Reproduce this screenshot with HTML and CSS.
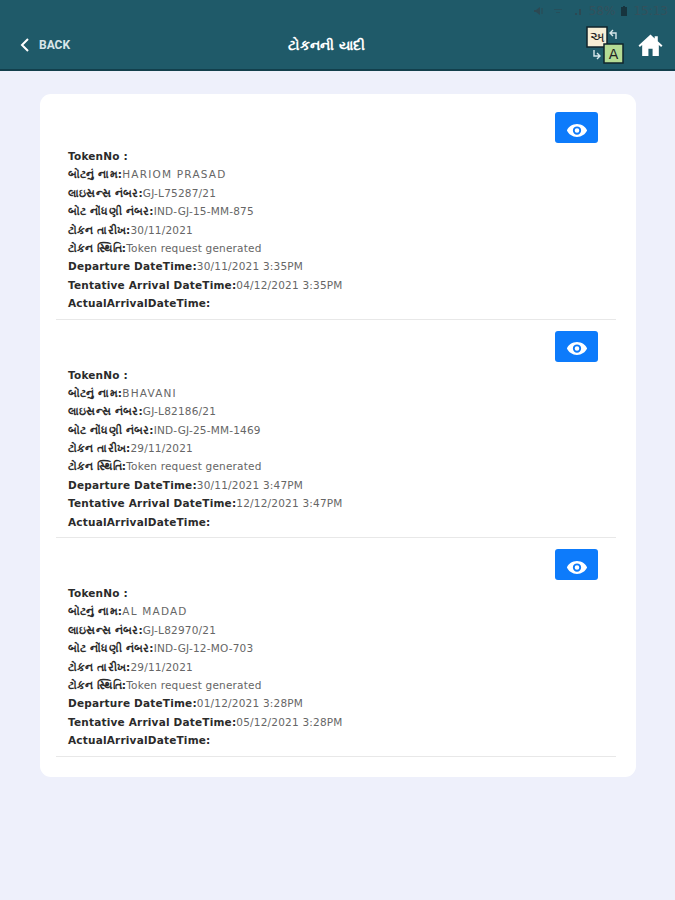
FILE: index.html
```html
<!DOCTYPE html>
<html lang="gu">
<head>
    <meta charset="UTF-8">
    <meta name="viewport" content="width=device-width, initial-scale=1.0">
    <title>ટોકનની યાદી</title>
    <link rel="stylesheet" href="styles.css">
</head>
<body>
    <header class="topbar">
        <div class="status">
            <svg class="status-icon" viewBox="0 0 10 10"><path d="M1 4h2l4-3v8L3 6H1z"/><path d="M8.500 2h1v6h-1z"/></svg>
            <svg class="status-icon status-wifi" viewBox="0 0 10 10"><path d="M1 3h8v1H1zM3 6h4v1H3z"/></svg>
            <svg class="status-icon" viewBox="0 0 10 10"><path d="M2 7h2v2H2zM6 3h2v6H6z"/></svg>
            <span>58%</span>
            <svg class="status-icon status-battery" viewBox="0 0 6 10"><path d="M2 0h2v1h2v9H0V1h2z"/></svg>
            <span>15:13</span>
        </div>
        <div class="bar">
            <a class="back" href="#">
                <svg class="back-icon" viewBox="0 0 10 16"><path d="M8 2 2 8l6 6"/></svg>
                <span>BACK</span>
            </a>
            <h1>ટોકનની યાદી</h1>
            <div class="actions">
                <svg class="lang-icon" viewBox="0 0 38 38">
                    <path class="arrow" d="M24 7h6v6M27 4l-3 3 3 3M8 24v6h6M11 27l3 3-3 3"/>
                    <rect class="lang-gu" x="1" y="1" width="20" height="20"/>
                    <text class="lang-text" x="11" y="16">અ</text>
                    <rect class="lang-en" x="18" y="18" width="19" height="19"/>
                    <text class="lang-text" x="27.5" y="33">A</text>
                </svg>
                <svg class="home-icon" viewBox="0 0 24 24"><path d="M12 1.500 0.500 12l1.300 1.400L4 11.400V22h6v-7h4v7h6V11.400l2.200 2L23.500 12 19 7.900V3h-3v2.200z"/></svg>
            </div>
        </div>
    </header>

    <main class="card">
        <section class="token">
            <div class="token-top"><button class="view"><svg class="eye" viewBox="0 0 24 16"><path fill-rule="evenodd" d="M12 1c5 0 9.200 3 11 7-1.800 4-6 7-11 7S2.800 12 1 8c1.800-4 6-7 11-7zm0 2.500a4.500 4.500 0 1 0 0 9 4.500 4.500 0 0 0 0-9zm0 2a2.500 2.500 0 1 1 0 5 2.500 2.500 0 0 1 0-5z"/></svg></button></div>
            <p><b>TokenNo :</b></p>
            <p><b>બોટનું નામ:</b><span class="name">HARIOM PRASAD</span></p>
            <p><b>લાઇસન્સ નંબર:</b>GJ-L75287/21</p>
            <p><b>બોટ નોંધણી નંબર:</b>IND-GJ-15-MM-875</p>
            <p><b>ટોકન તારીખ:</b>30/11/2021</p>
            <p><b>ટોકન સ્થિતિ:</b>Token request generated</p>
            <p><b>Departure DateTime:</b>30/11/2021 3:35PM</p>
            <p><b>Tentative Arrival DateTime:</b>04/12/2021 3:35PM</p>
            <p><b>ActualArrivalDateTime:</b></p>
        </section>
        <section class="token">
            <div class="token-top"><button class="view"><svg class="eye" viewBox="0 0 24 16"><path fill-rule="evenodd" d="M12 1c5 0 9.200 3 11 7-1.800 4-6 7-11 7S2.800 12 1 8c1.800-4 6-7 11-7zm0 2.500a4.500 4.500 0 1 0 0 9 4.500 4.500 0 0 0 0-9zm0 2a2.500 2.500 0 1 1 0 5 2.500 2.500 0 0 1 0-5z"/></svg></button></div>
            <p><b>TokenNo :</b></p>
            <p><b>બોટનું નામ:</b><span class="name">BHAVANI</span></p>
            <p><b>લાઇસન્સ નંબર:</b>GJ-L82186/21</p>
            <p><b>બોટ નોંધણી નંબર:</b>IND-GJ-25-MM-1469</p>
            <p><b>ટોકન તારીખ:</b>29/11/2021</p>
            <p><b>ટોકન સ્થિતિ:</b>Token request generated</p>
            <p><b>Departure DateTime:</b>30/11/2021 3:47PM</p>
            <p><b>Tentative Arrival DateTime:</b>12/12/2021 3:47PM</p>
            <p><b>ActualArrivalDateTime:</b></p>
        </section>
        <section class="token">
            <div class="token-top"><button class="view"><svg class="eye" viewBox="0 0 24 16"><path fill-rule="evenodd" d="M12 1c5 0 9.200 3 11 7-1.800 4-6 7-11 7S2.800 12 1 8c1.800-4 6-7 11-7zm0 2.500a4.500 4.500 0 1 0 0 9 4.500 4.500 0 0 0 0-9zm0 2a2.500 2.500 0 1 1 0 5 2.500 2.500 0 0 1 0-5z"/></svg></button></div>
            <p><b>TokenNo :</b></p>
            <p><b>બોટનું નામ:</b><span class="name">AL MADAD</span></p>
            <p><b>લાઇસન્સ નંબર:</b>GJ-L82970/21</p>
            <p><b>બોટ નોંધણી નંબર:</b>IND-GJ-12-MO-703</p>
            <p><b>ટોકન તારીખ:</b>29/11/2021</p>
            <p><b>ટોકન સ્થિતિ:</b>Token request generated</p>
            <p><b>Departure DateTime:</b>01/12/2021 3:28PM</p>
            <p><b>Tentative Arrival DateTime:</b>05/12/2021 3:28PM</p>
            <p><b>ActualArrivalDateTime:</b></p>
        </section>
    </main>
</body>
</html>
```

FILE: styles.css
```css
body {
    font-family: "DejaVu Sans", "Noto Sans", sans-serif;
    margin: 0;
    padding: 0;
    background-color: #eef0fb;
    color: #666;
}
.topbar {
    background-color: #1f5a69;
    border-bottom: 2px solid #123f4c;
    height: 69px;
    color: #fff;
}
.status {
    display: flex;
    justify-content: flex-end;
    align-items: center;
    gap: 6px;
    height: 21px;
    padding-right: 7px;
    font-size: 12px;
    color: #33515c;
}
.status-icon {
    width: 10px;
    height: 10px;
    fill: #2c4953;
}
.status-wifi {
    margin: 0 4px;
    opacity: 0.6;
}
.status-battery {
    width: 6px;
    fill: #17343e;
}
.bar {
    display: grid;
    grid-template-columns: 1fr auto 1.115fr;
    align-items: center;
    height: 48px;
    padding: 0 12px 0 20px;
}
.back {
    display: flex;
    align-items: center;
    gap: 9px;
    color: #d9e6ea;
    text-decoration: none;
    font-family: "Roboto", sans-serif;
    font-size: 12px;
    font-weight: 700;
}
.back-icon {
    width: 10px;
    height: 16px;
    fill: none;
    stroke: #fff;
    stroke-width: 2;
}
.topbar h1 {
    margin: 0;
    font-size: 14px;
    font-weight: 700;
}
.actions {
    display: flex;
    justify-content: flex-end;
    align-items: center;
    gap: 14px;
}
.lang-icon {
    width: 38px;
    height: 38px;
}
.arrow {
    fill: none;
    stroke: #d6e6ea;
    stroke-width: 1.400;
}
.lang-gu {
    fill: #f6eed6;
    stroke: #10242b;
    stroke-width: 1.500;
}
.lang-en {
    fill: #b5dc95;
    stroke: #10242b;
    stroke-width: 1.500;
}
.lang-text {
    font-size: 14px;
    text-anchor: middle;
    fill: #222;
}
.home-icon {
    width: 25px;
    height: 25px;
    fill: #fff;
}
.card {
    width: 560px;
    margin: 23px 0 0 40px;
    padding: 7px 20px 20px 16px;
    background-color: #fff;
    border-radius: 11px;
}
.token {
    padding: 11px 12px 6px;
    border-bottom: 1px solid #e8e8e8;
}
.token-top {
    display: flex;
    justify-content: flex-end;
    padding-right: 6px;
    margin-bottom: 4px;
}
.view {
    display: flex;
    align-items: center;
    justify-content: center;
    width: 43px;
    height: 31px;
    padding: 5px 0 0;
    border: 0;
    border-radius: 3px;
    background-color: #0d7bfb;
}
.eye {
    width: 22px;
    height: 15px;
    fill: #fff;
}
.token p {
    margin: 0;
    height: 18.400px;
    line-height: 18.400px;
    font-size: 10.500px;
    letter-spacing: 0.2px;
    white-space: nowrap;
}
.token b {
    color: #2b2b2b;
}
.token .name {
    letter-spacing: 1.200px;
}
```
